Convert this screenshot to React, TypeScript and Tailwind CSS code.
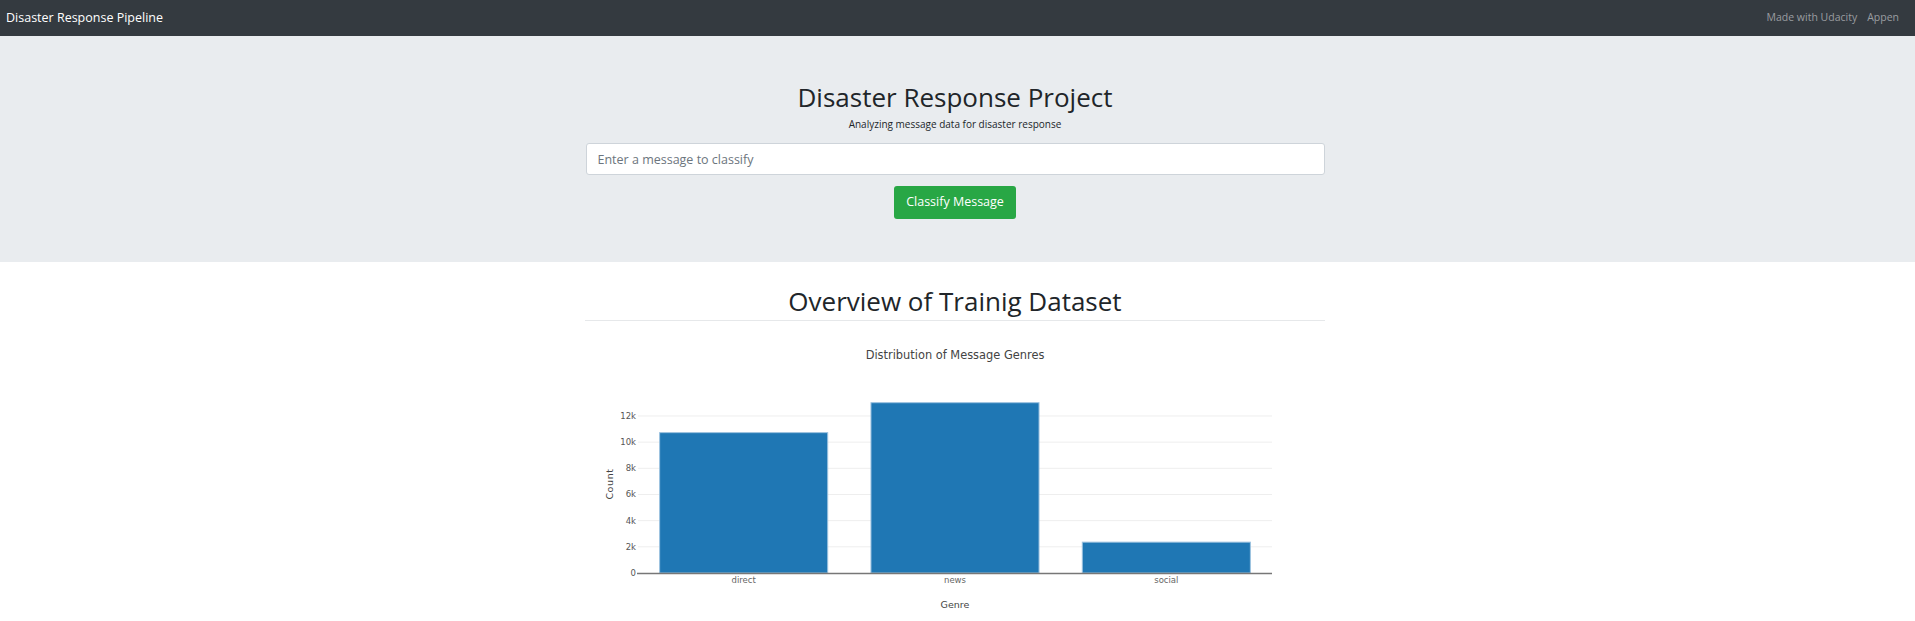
import React from "react";

const data = [
  { label: "direct", value: 10766 },
  { label: "news", value: 13054 },
  { label: "social", value: 2396 },
];

function Chart() {
  const left = 53;
  const right = 687;
  const y0 = 252;
  const per = 26.17 / 2000;
  const band = (right - left) / data.length;
  const bw = band * 0.8;
  const ticks = [0, 2000, 4000, 6000, 8000, 10000, 12000];
  const font = "'DejaVu Sans', Verdana, sans-serif";
  return (
    <svg width={740} height={300} style={{ fontFamily: font }}>
      <text x={370} y={38} textAnchor="middle" fontSize={11.4} fill="#444">
        Distribution of Message Genres
      </text>
      {ticks.map((t) => {
        const y = y0 - t * per;
        return (
          <g key={t}>
            {t > 0 && <line x1={left} x2={right} y1={y} y2={y} stroke="#eeeeee" strokeWidth={1} />}
            <text x={left - 2} y={y + 3} textAnchor="end" fontSize={8.5} fill="#555">
              {t === 0 ? "0" : `${t / 1000}k`}
            </text>
          </g>
        );
      })}
      {data.map((d, i) => {
        const x = left + band * i + (band - bw) / 2;
        const h = d.value * per;
        return (
          <g key={d.label}>
            <rect x={x + 0.5} y={y0 - h + 0.5} width={bw - 1} height={h - 0.5} fill="#1f77b4" stroke="#9cc2df" strokeWidth={1} />
            <text x={left + band * i + band / 2} y={y0 + 9.5} textAnchor="middle" fontSize={8.5} fill="#666">
              {d.label}
            </text>
          </g>
        );
      })}
      <line x1={left - 1} x2={right} y1={y0 + 0.5} y2={y0 + 0.5} stroke="#777" strokeWidth={1.5} />
      <text x={370} y={287} textAnchor="middle" fontSize={9.5} fill="#444">
        Genre
      </text>
      <text x={28} y={163} textAnchor="middle" fontSize={9.5} fill="#444" letterSpacing={0.6} transform="rotate(-90 28 163)">
        Count
      </text>
    </svg>
  );
}

export default function App() {
  return (
    <div className="min-h-[621px] bg-white text-[#212529]" style={{ fontFamily: "'Open Sans', 'Noto Sans', sans-serif" }}>
      <nav className="flex h-[36px] items-center justify-between bg-[#343a40] pl-[6px] pr-[16px]">
        <span className="text-[12.5px] text-white">Disaster Response Pipeline</span>
        <div className="flex items-center gap-[10px] text-[10.5px] text-[#9a9da0]">
          <span>Made with Udacity</span>
          <span>Appen</span>
        </div>
      </nav>
      <div className="flex flex-col items-center bg-[#e9ecef] pt-[45px] pr-[5px] pb-[43px]">
        <h1 className="text-[26px] leading-[32px] font-normal">Disaster Response Project</h1>
        <p className="mt-[4px] text-[10px] leading-[14px]">Analyzing message data for disaster response</p>
        <input
          className="mt-[12px] h-[32px] w-[739px] rounded-[3px] border border-[#ced4da] bg-white px-[11px] text-[12.5px] placeholder:text-[#6c757d] outline-none"
          placeholder="Enter a message to classify"
        />
        <button className="mt-[11px] h-[33px] w-[122px] rounded-[3px] bg-[#28a745] text-[12.5px] text-white">
          Classify Message
        </button>
      </div>
      <div className="pr-[5px]">
        <div className="mx-auto w-[740px]">
          <h1 className="mt-[23px] text-center text-[26px] leading-[32px] font-normal">Overview of Trainig Dataset</h1>
          <div className="mt-[3px] border-t border-[#e6e8ea]" />
          <Chart />
        </div>
      </div>
    </div>
  );
}
